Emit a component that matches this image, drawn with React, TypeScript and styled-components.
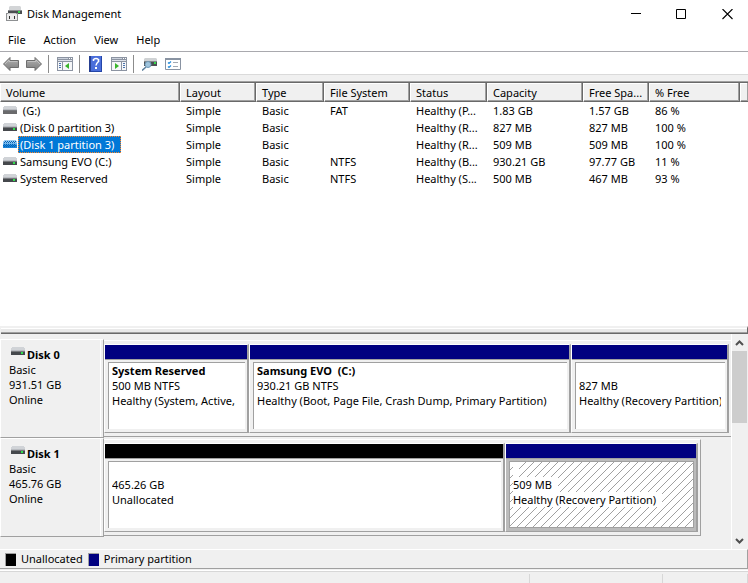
import React from "react";
import styled, { createGlobalStyle, css } from "styled-components";

const GlobalStyle = createGlobalStyle`
  * { box-sizing: border-box; }
  body { margin: 0; background: #f0f0f0; }
  button {
    border: 0;
    padding: 0;
    background: none;
    font: inherit;
    color: inherit;
  }
  svg { display: block; flex: none; }
`;

const Window = styled.div`
  min-height: 100vh;
  display: flex;
  flex-direction: column;
  background: #f0f0f0;
  color: #000;
  font-family: "Noto Sans", "Segoe UI", sans-serif;
  font-size: 11px;
  line-height: 15px;
`;

const TitleBar = styled.header`
  display: flex;
  align-items: center;
  height: 28px;
  padding-left: 6px;
  background: #fff;
`;

const Title = styled.h1`
  flex: 1;
  margin: 0 0 0 5px;
  padding-bottom: 2px;
  font-size: 11px;
  font-weight: 400;
`;

const CaptionButton = styled.button`
  display: grid;
  place-items: center;
  width: 46px;
  height: 28px;
`;

const CaptionButtons = styled.div`
  display: flex;
  margin-right: -2px;
  overflow: hidden;
`;

const MenuBar = styled.nav`
  display: flex;
  height: 24px;
  padding-left: 8px;
  gap: 18px;
  background: #fff;
  border-bottom: 1px solid #a9a9ae;
`;

const MenuItem = styled.button`
  height: 23px;
`;

const Toolbar = styled.div`
  display: flex;
  align-items: center;
  height: 23px;
  padding: 2px 0 0 3px;
  background: #fff;
  border-bottom: 1px solid #dadada;
`;

const Tool = styled.button<{ $gap?: number }>`
  margin-right: ${(p) => p.$gap ?? 7}px;
`;

const Separator = styled.span<{ $gap?: number }>`
  width: 1px;
  height: 18px;
  margin-right: ${(p) => p.$gap ?? 8}px;
  background: #8c8c8c;
`;

const ListPane = styled.main`
  flex: 1;
  margin-top: 6px;
  border-top: 1px solid #a0a0a0;
  background: #fff;
  overflow: hidden;
`;

const VolumeTable = styled.table`
  width: 100%;
  table-layout: fixed;
  border-collapse: separate;
  border-spacing: 0;
  border-top: 1px solid #696969;
`;

const Column = styled.col<{ $width?: number }>`
  width: ${(p) => (p.$width ? `${p.$width}px` : "auto")};
`;

const HeadCell = styled.th`
  height: 19px;
  padding: 0 0 0 5px;
  text-align: left;
  font-weight: 400;
  white-space: nowrap;
  overflow: hidden;
  background: #f0f0f0;
  border-left: 1px solid #fff;
  border-right: 1px solid #696969;
  border-bottom: 1px solid #696969;
  box-shadow: inset -1px -1px #a0a0a0, inset 0 1px #fff;

  &:last-child {
    border-right: 0;
  }
`;

const Cell = styled.td`
  height: 17px;
  padding: 0 0 0 6px;
  white-space: nowrap;
  overflow: hidden;
`;

const NameCell = styled.th`
  height: 17px;
  padding: 0 0 0 3px;
  text-align: left;
  font-weight: 400;
`;

const VolumeName = styled.span<{ $selected?: boolean }>`
  display: flex;
  align-items: center;
  height: 17px;
  padding: 0 6px 0 1px;
  white-space: pre;
  border: 1px solid transparent;
  ${(p) =>
    p.$selected &&
    css`
      color: #fff;
      background: #0078d7;
      border: 1px dotted #ff8728;
    `}
`;

const NameLine = styled.div`
  display: flex;
  align-items: center;
  gap: 1px;
  height: 17px;
`;

const Splitter = styled.div`
  height: 8px;
  margin-left: 1px;
  border-top: 2px solid #f0f0f0;
  border-bottom: 1px solid #696969;
  border-right: 1px solid #696969;
  background: #e9e9e9;
  box-shadow: inset 0 1px #fff, inset 0 -1px #a0a0a0;
`;

const GraphPane = styled.section`
  display: flex;
`;

const DiskList = styled.div`
  flex: 1;
  min-width: 0;
  padding: 5px 0 12px;
  border-right: 1px solid #fff;
`;

const DiskRow = styled.div`
  display: flex;
`;

const DiskLabel = styled.div`
  flex: none;
  width: 104px;
  height: 99px;
  padding: 7px 0 0 8px;
  border: 1px solid #fff;
  border-right-color: #a0a0a0;
  border-bottom-color: #a0a0a0;
  box-shadow: inset -2px 0 #f0f0f0, inset -3px 0 #fff;
`;

const DiskTitle = styled.h2`
  display: flex;
  align-items: flex-start;
  gap: 2px;
  height: 15px;
  margin: 0 0 0 2px;
  font-size: 11px;
  font-weight: 700;
`;

const DiskFrame = styled.div<{ $span: string; $columns: string }>`
  width: ${(p) => p.$span};
  display: grid;
  grid-template-columns: ${(p) => p.$columns};
  margin: 1px 0;
  padding: 3px 2px 3px 0;
  border-top: 1px solid #fff;
  border-bottom: 1px solid #a0a0a0;
  border-right: ${(p) => (p.$span === "100%" ? "0" : "1px solid #a0a0a0")};
`;

const FrameSlot = styled.div`
  flex: 1;
  min-width: 0;
`;

const Partition = styled.div<{ $color: string; $selected?: boolean }>`
  display: flex;
  flex-direction: column;
  min-width: 0;
  height: 89px;
  border: 1px solid #fff;
  border-right: 2px solid #a0a0a0;
  border-bottom-color: #a0a0a0;
  background: ${(p) => (p.$selected ? "#bbbbbb" : "#f0f0f0")};

  &::before {
    content: "";
    height: 14px;
    flex: none;
    background: ${(p) => p.$color};
    border-bottom: 1px solid #a0a0a0;
  }
`;

const PartitionBox = styled.div<{ $selected?: boolean }>`
  flex: 1;
  margin: 2px 2px 3px 3px;
  padding: 0 4px 0 3px;
  overflow: hidden;
  white-space: pre;
  background: #fff;
  border-left: 1px solid #a0a0a0;
  border-top: 1px solid #a0a0a0;
  ${(p) =>
    p.$selected &&
    css`
      border: 1px solid #a0a0a0;
      background-image: linear-gradient(
        135deg,
        transparent 46%,
        #a0a0a0 46%,
        #a0a0a0 54%,
        transparent 54%
      );
      background-size: 8px 8px;
    `}
`;

const PartitionLine = styled.div<{ $bold?: boolean; $filled?: boolean }>`
  width: ${(p) => (p.$filled ? "fit-content" : "auto")};
  min-width: 6px;
  height: 15px;
  padding-right: ${(p) => (p.$filled ? 6 : 0)}px;
  overflow: hidden;
  font-weight: ${(p) => (p.$bold ? 700 : 400)};
  background: ${(p) => (p.$filled ? "#fff" : "transparent")};
`;

const ScrollBar = styled.div`
  display: flex;
  flex-direction: column;
  width: 16px;
  padding-right: 1px;
`;

const ScrollButton = styled.button`
  display: grid;
  place-items: center;
  height: 17px;
`;

const ScrollTrack = styled.div`
  flex: 1;
`;

const ScrollThumb = styled.div`
  height: 40%;
  background: #cdcdcd;
`;

const Legend = styled.div`
  display: flex;
  align-items: center;
  gap: 5px;
  height: 20px;
  padding-left: 5px;
  border-top: 1px solid #fff;
  border-right: 1px solid #a0a0a0;
  border-bottom: 1px solid #a0a0a0;
`;

const Swatch = styled.span<{ $color: string }>`
  width: 11px;
  height: 13px;
  background: ${(p) => p.$color};
  border: 1px solid #a0a0a0;
  border-right: 0;
  border-bottom: 0;
`;

const LegendText = styled.span`
  padding-bottom: 2px;
`;

const StatusBar = styled.footer`
  display: grid;
  grid-template-columns: 530fr 133fr 85fr;
  height: 14px;
  padding-top: 1px;
  border-top: 1px solid #f0f0f0;
  box-shadow: inset 0 1px #fff, inset 0 2px #d7d7d7;
`;

const StatusCell = styled.span`
  margin-top: 3px;
  border-right: 1px solid #d7d7d7;
`;

type DriveKind = "plain" | "active" | "selected";

function DriveIcon({ kind = "active" }: { kind?: DriveKind }) {
  const blue = kind === "selected";
  return (
    <svg width="14" height="9" viewBox="0 0 14 9" shapeRendering="crispEdges" aria-hidden="true">
      <path d="M1 0h12v1h1v3H0V1h1z" fill={blue ? "#9ccbf0" : "#d0d3d7"} />
      <path d="M0 3h14v1H0z" fill={blue ? "#6fb2e8" : "#b9bcc1"} />
      <path d="M0 4h14v4H0z" fill={blue ? "#1c83d6" : kind === "plain" ? "#6a6a6c" : "#45484c"} />
      <path d="M0 4h14v1H0z" fill={blue ? "#4ea4e6" : "#77797d"} />
      {kind === "active" && <path d="M10 5h2v2h-2z" fill="#2fe04c" />}
      {blue && (
        <path
          d="M1 4h1v1H1zM3 4h1v1H3zM5 4h1v1H5zM7 4h1v1H7zM9 4h1v1H9zM11 4h1v1h-1zM0 5h1v1H0zM2 5h1v1H2zM4 5h1v1H4zM6 5h1v1H6zM8 5h1v1H8zM10 5h1v1h-1zM12 5h1v1h-1zM1 6h1v1H1zM3 6h1v1H3zM5 6h1v1H5zM7 6h1v1H7zM9 6h1v1H9zM11 6h1v1h-1zM2 1h1v1H2zM4 1h1v1H4zM6 1h1v1H6zM8 1h1v1H8zM10 1h1v1h-1zM12 1h1v1h-1zM1 2h1v1H1zM3 2h1v1H3zM5 2h1v1H5zM7 2h1v1H7zM9 2h1v1H9zM11 2h1v1h-1z"
          fill="#0063b8"
        />
      )}
    </svg>
  );
}

function AppIcon() {
  return (
    <svg width="16" height="16" viewBox="0 0 16 16" aria-hidden="true">
      <path d="M4 0h10l1 1v3H3V1z" fill="#d3d5d7" />
      <path d="M2 4h14v4H2z" fill="#4a4d50" />
      <path d="M2 4h14v1H2z" fill="#898b8e" />
      <path d="M12 5h2v2h-2z" fill="#35d84b" />
      <path d="M0 7h12v8H0z" fill="#8e9092" />
      <path d="M1 8h10v6H1z" fill="#ececec" />
      <path d="M2 7h8v1H2z" fill="#c9cacb" />
      <path d="M3 10h1v3H3zM8 10h1v3H8z" fill="#333" />
    </svg>
  );
}

function ArrowIcon({ forward }: { forward?: boolean }) {
  return (
    <svg width="16" height="16" viewBox="0 0 16 16" aria-hidden="true">
      <defs>
        <linearGradient id="arrowFill" x2="0" y2="1">
          <stop stopColor="#b4b4b4" />
          <stop offset="1" stopColor="#7c7c7c" />
        </linearGradient>
      </defs>
      <path
        d={forward ? "M15.5 8L9 1.5v3H.5v7H9v3z" : "M.5 8L7 1.5v3h8.5v7H7v3z"}
        fill="url(#arrowFill)"
        stroke="#6e6e6e"
      />
      <path
        d={forward ? "M1.5 5.5H10V4l4 4" : "M2 8l4-4v1.5h8.5"}
        fill="none"
        stroke="#c8c8c8"
        strokeWidth="0.8"
      />
    </svg>
  );
}

function PaneIcon({ right }: { right?: boolean }) {
  return (
    <svg width="16" height="14" viewBox="0 0 16 14" shapeRendering="crispEdges" aria-hidden="true">
      <path d="M0 0h16v14H0z" fill="#8c94a2" />
      <path d="M1 1h10v1H1z" fill="#cbd1dc" />
      <path d="M12 1h1v1h-1zM14 1h1v1h-1z" fill="#fff" />
      <path d="M1 3h14v1H1z" fill="#dfe3ea" />
      {right ? (
        <>
          <path d="M1 5h9v8H1zM11 5h4v8h-4z" fill="#f6f7f9" />
          <path d="M12 6h2v1h-2zM12 8h2v1h-2zM12 10h2v1h-2z" fill="#4a73ad" />
          <path d="M4 6l4 3-4 3z" fill="#38b52b" shapeRendering="auto" />
        </>
      ) : (
        <>
          <path d="M1 5h4v8H1zM6 5h9v8H6z" fill="#f6f7f9" />
          <path d="M2 6h2v1H2zM2 8h2v1H2zM2 10h2v1H2z" fill="#4a73ad" />
          <path d="M12 6L8 9l4 3z" fill="#38b52b" shapeRendering="auto" />
        </>
      )}
    </svg>
  );
}

function HelpIcon() {
  return (
    <svg width="13" height="16" viewBox="0 0 13 16" aria-hidden="true">
      <path d="M0 0h13v16H0z" fill="#2446a8" />
      <path d="M2 0h10v15H2z" fill="#4a6edb" />
      <path d="M0 0h2v16H0z" fill="#263f91" />
      <path d="M4.5 5V3.5q2.5-2 5 0v2Q7 7.500 7 9.500" fill="none" stroke="#fff" strokeWidth="1.6" />
      <path d="M6 11h2v2H6z" fill="#fff" />
    </svg>
  );
}

function RescanIcon() {
  return (
    <svg width="16" height="14" viewBox="0 0 16 14" aria-hidden="true">
      <path d="M3 1h11l1 1v2H2V2z" fill="#cfd2d4" />
      <path d="M2 4h13v5H2z" fill="#4b4f53" />
      <path d="M2 4h13v1H2z" fill="#85888b" />
      <path d="M12 5h2v2h-2z" fill="#36d94b" />
      <path d="M4 10l-4 3.500" stroke="#5d7f9c" strokeWidth="1.5" />
      <circle cx="6" cy="7.500" r="3" fill="#9fc4dd" stroke="#6f98b5" />
    </svg>
  );
}

function ChecklistIcon() {
  return (
    <svg width="16" height="13" viewBox="0 0 16 13" aria-hidden="true">
      <path d="M.5.5h15v11H.5z" fill="#fff" stroke="#8993a2" />
      <path d="M0 0h16v2H0z" fill="#8993a2" />
      <path d="M3 4.500l1 1 2-2M3 8.500l1 1 2-2" fill="none" stroke="#2a8fdc" strokeWidth="1.2" />
      <path d="M8 4.500h5M8 8.500h5" stroke="#a3a9b2" />
    </svg>
  );
}

function Chevron({ down }: { down?: boolean }) {
  return (
    <svg width="9" height="6" viewBox="0 0 9 6" aria-hidden="true">
      <path d={down ? "M1 1l3.500 3.500L8 1" : "M1 5l3.500-3.500L8 5"} fill="none" stroke="#505050" strokeWidth="2" />
    </svg>
  );
}

const columns: { label: string; width?: number }[] = [
  { label: "Volume", width: 180 },
  { label: "Layout", width: 76 },
  { label: "Type", width: 68 },
  { label: "File System", width: 86 },
  { label: "Status", width: 77 },
  { label: "Capacity", width: 96 },
  { label: "Free Spa...", width: 66 },
  { label: "% Free", width: 91 },
  { label: "" },
];

const volumes: { name: string; kind: DriveKind; values: string[] }[] = [
  { name: " (G:)", kind: "plain", values: ["Simple", "Basic", "FAT", "Healthy (P...", "1.83 GB", "1.57 GB", "86 %"] },
  { name: "(Disk 0 partition 3)", kind: "active", values: ["Simple", "Basic", "", "Healthy (R...", "827 MB", "827 MB", "100 %"] },
  { name: "(Disk 1 partition 3)", kind: "selected", values: ["Simple", "Basic", "", "Healthy (R...", "509 MB", "509 MB", "100 %"] },
  { name: "Samsung EVO (C:)", kind: "active", values: ["Simple", "Basic", "NTFS", "Healthy (B...", "930.21 GB", "97.77 GB", "11 %"] },
  { name: "System Reserved", kind: "active", values: ["Simple", "Basic", "NTFS", "Healthy (S...", "500 MB", "467 MB", "93 %"] },
];

const PRIMARY = "#000080";
const UNALLOCATED = "#000000";

const disks = [
  {
    name: "Disk 0",
    size: "931.51 GB",
    span: "100%",
    columns: "145fr 322fr 158fr",
    partitions: [
      { color: PRIMARY, lines: ["System Reserved", "500 MB NTFS", "Healthy (System, Active,"] },
      {
        color: PRIMARY,
        lines: ["Samsung EVO  (C:)", "930.21 GB NTFS", "Healthy (Boot, Page File, Crash Dump, Primary Partition)"],
      },
      { color: PRIMARY, lines: ["", "827 MB", "Healthy (Recovery Partition)"] },
    ],
  },
  {
    name: "Disk 1",
    size: "465.76 GB",
    span: "95.2%",
    columns: "401fr 193fr",
    partitions: [
      { color: UNALLOCATED, lines: ["", "465.26 GB", "Unallocated"] },
      { color: PRIMARY, selected: true, lines: ["", "509 MB", "Healthy (Recovery Partition)"] },
    ],
  },
];

export default function App() {
  return (
    <Window>
      <GlobalStyle />
      <TitleBar>
        <AppIcon />
        <Title>Disk Management</Title>
        <CaptionButtons>
          <CaptionButton aria-label="Minimize">
            <svg width="11" height="11" viewBox="0 0 11 11">
              <path d="M1 4.500h10" stroke="#000" />
            </svg>
          </CaptionButton>
          <CaptionButton aria-label="Maximize">
            <svg width="11" height="11" viewBox="0 0 11 11">
              <path d="M.5.5h9v9h-9z" fill="none" stroke="#000" />
            </svg>
          </CaptionButton>
          <CaptionButton aria-label="Close">
            <svg width="11" height="11" viewBox="0 0 11 11">
              <path d="M.5 0l10 10M10.500 0l-10 10" stroke="#000" strokeWidth="1.1" />
            </svg>
          </CaptionButton>
        </CaptionButtons>
      </TitleBar>
      <MenuBar>
        {["File", "Action", "View", "Help"].map((item) => (
          <MenuItem key={item}>{item}</MenuItem>
        ))}
      </MenuBar>
      <Toolbar>
        <Tool aria-label="Back"><ArrowIcon /></Tool>
        <Tool aria-label="Forward" $gap={6}><ArrowIcon forward /></Tool>
        <Separator />
        <Tool aria-label="Show or hide console tree" $gap={6}><PaneIcon /></Tool>
        <Separator $gap={9} />
        <Tool aria-label="Help" $gap={9}><HelpIcon /></Tool>
        <Tool aria-label="Show or hide action pane" $gap={6}><PaneIcon right /></Tool>
        <Separator />
        <Tool aria-label="Rescan disks"><RescanIcon /></Tool>
        <Tool aria-label="Settings"><ChecklistIcon /></Tool>
      </Toolbar>
      <ListPane>
        <VolumeTable>
          <colgroup>
            {columns.map((c) => (
              <Column key={c.label} $width={c.width} />
            ))}
          </colgroup>
          <thead>
            <tr>
              {columns.map((c) => (
                <HeadCell key={c.label} scope="col">{c.label}</HeadCell>
              ))}
            </tr>
          </thead>
          <tbody>
            {volumes.map((v) => (
              <tr key={v.name} aria-selected={v.kind === "selected"}>
                <NameCell scope="row">
                  <NameLine>
                    <DriveIcon kind={v.kind} />
                    <VolumeName $selected={v.kind === "selected"}>{v.name}</VolumeName>
                  </NameLine>
                </NameCell>
                {v.values.map((value, i) => (
                  <Cell key={i}>{value}</Cell>
                ))}
              </tr>
            ))}
          </tbody>
        </VolumeTable>
      </ListPane>
      <Splitter role="separator" />
      <GraphPane>
        <DiskList>
          {disks.map((disk) => (
            <DiskRow key={disk.name}>
              <DiskLabel>
                <DiskTitle>
                  <DriveIcon />
                  {disk.name}
                </DiskTitle>
                <div>Basic</div>
                <div>{disk.size}</div>
                <div>Online</div>
              </DiskLabel>
              <FrameSlot>
                <DiskFrame $span={disk.span} $columns={disk.columns}>
                  {disk.partitions.map((part, i) => {
                    const selected = "selected" in part;
                    return (
                      <Partition key={i} $color={part.color} $selected={selected}>
                        <PartitionBox $selected={selected}>
                          {part.lines.map((line, n) => (
                            <PartitionLine key={n} $bold={n === 0} $filled={selected}>
                              {line}
                            </PartitionLine>
                          ))}
                        </PartitionBox>
                      </Partition>
                    );
                  })}
                </DiskFrame>
              </FrameSlot>
            </DiskRow>
          ))}
        </DiskList>
        <ScrollBar>
          <ScrollButton aria-label="Scroll up"><Chevron /></ScrollButton>
          <ScrollTrack><ScrollThumb /></ScrollTrack>
          <ScrollButton aria-label="Scroll down"><Chevron down /></ScrollButton>
        </ScrollBar>
      </GraphPane>
      <Legend>
        <Swatch $color={UNALLOCATED} />
        <LegendText>Unallocated</LegendText>
        <Swatch $color={PRIMARY} />
        <LegendText>Primary partition</LegendText>
      </Legend>
      <StatusBar>
        <StatusCell />
        <StatusCell />
        <StatusCell />
      </StatusBar>
    </Window>
  );
}
